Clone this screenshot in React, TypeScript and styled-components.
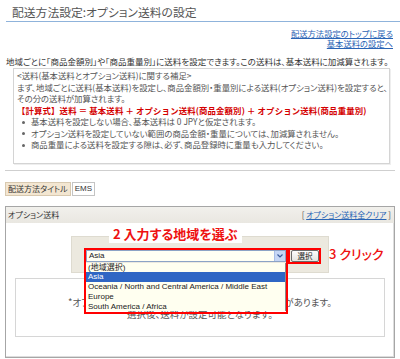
import React from 'react'
import styled, { createGlobalStyle } from 'styled-components'

const GlobalStyle = createGlobalStyle`
    html, body {
        margin: 0;
        padding: 0;
        background: #ffffff;
    }
    body {
        font-family: 'Noto Sans CJK JP', 'Liberation Sans', sans-serif;
        font-feature-settings: 'palt';
        color: #444;
        width: 400px;
        overflow: hidden;
    }
`

const Page = styled.div`
    width: 400px;
    height: 359px;
    box-sizing: border-box;
    padding: 0 5px;
    overflow: hidden;
    position: relative;
`

const Title = styled.h1`
    margin: 0 -5px 0 1px;
    padding: 5px 0 2px 6px;
    font-size: 11.8px;
    line-height: 14px;
    font-weight: 400;
    color: #555;
    border-bottom: 1px solid #8fb3db;
`

const NavLinks = styled.div`
    margin-top: 6px;
    padding-right: 2px;
    display: flex;
    flex-direction: column;
    align-items: flex-end;
`

const NavLink = styled.a`
    font-size: 8.3px;
    line-height: 10px;
    color: #2a64b5;
    text-decoration: underline;
`

const Lead = styled.p`
    margin: 8px 0 0 1px;
    font-size: 8.5px;
    line-height: 10px;
    color: #333;
    white-space: nowrap;
`

const NoteBox = styled.div`
    margin: 2px 5px 0 8px;
    padding: 1px 3px 12px 3px;
    border: 1px solid #d4d4d4;
    box-shadow: 1px 1px 0 #eee;
    font-size: 8.4px;
    line-height: 11.5px;
    color: #555;
    white-space: nowrap;
`

const Formula = styled.div`
    color: #d40000;
    font-weight: 700;
    font-feature-settings: normal;
    letter-spacing: 0.15px;
`

const BulletList = styled.ul`
    margin: 0;
    padding: 0 0 0 14px;
    list-style: none;
`

const Bullet = styled.li`
    position: relative;
    &::before {
        content: '';
        position: absolute;
        left: -9px;
        top: 4.5px;
        width: 3px;
        height: 3px;
        border-radius: 50%;
        background: #666;
    }
`

const Divider = styled.hr`
    margin: 6px 0 0 0;
    border: 0;
    border-top: 1px solid #cfcfcf;
`

const TabRow = styled.div`
    margin-top: 11px;
    display: flex;
    gap: 1px;
`

const Tab = styled.span<{ $active?: boolean }>`
    display: block;
    height: 14px;
    box-sizing: border-box;
    padding: 0 2px;
    font-size: 8px;
    line-height: 12px;
    color: #333;
    border: 1px solid ${({ $active }) => ($active ? '#d8c9b0' : '#c4c4c4')};
    background: ${({ $active }) => ($active ? '#f3e6d1' : '#ffffff')};
    font-family: ${({ $active }) => ($active ? "'Noto Sans CJK JP'" : "'Liberation Sans'")}, sans-serif;
`

const Panel = styled.div`
    margin-top: 10px;
    border: 1px solid #a6a6a6;
    box-shadow: inset -1px -1px 0 #ddd;
`

const PanelHeader = styled.div`
    height: 16px;
    padding: 0 3px 0 2px;
    display: flex;
    align-items: center;
    justify-content: space-between;
    background: linear-gradient(#f1f0ec, #e9e7e1);
    font-size: 8px;
    color: #333;
`

const ClearLink = styled.span`
    color: #555;
    a {
        color: #2a64b5;
        text-decoration: underline;
    }
`

const PanelBody = styled.div`
    padding: 13px 9px 20px 9px;
`

const SelectArea = styled.div`
    position: relative;
    width: 258px;
    height: 37px;
    box-sizing: border-box;
    margin: 0 auto;
    padding: 13px 0 0 14px;
    background: #ece9df;
    border: 1px solid #dedbd0;
    display: flex;
    align-items: flex-start;
`

const Callout = styled.span<{ $boxed?: boolean }>`
    position: absolute;
    color: #ee1111;
    font-size: 13px;
    line-height: 18px;
    font-weight: ${({ $boxed }) => ($boxed ? 700 : 500)};
    white-space: nowrap;
    background: ${({ $boxed }) => ($boxed ? '#ffffff' : 'transparent')};
    padding: 0 4px;
`

const SelectField = styled.div`
    position: relative;
    width: 200px;
    height: 12px;
`

const SelectBox = styled.div`
    height: 12px;
    box-sizing: border-box;
    border: 1px solid #8ca3c6;
    background: #fffff4;
    display: flex;
    align-items: center;
    justify-content: space-between;
    font-family: 'Liberation Sans', sans-serif;
    font-size: 8px;
    color: #222;
    padding-left: 2px;
`

const ArrowButton = styled.span`
    width: 10px;
    height: 10px;
    background: #c6d6f5;
    border-left: 1px solid #a8bde6;
    display: flex;
    align-items: center;
    justify-content: center;
`

const OptionList = styled.ul`
    position: absolute;
    left: 0;
    top: 13px;
    width: 200px;
    margin: 0;
    padding: 0;
    list-style: none;
    background: #fffff0;
    border-right: 1px solid #8a8a8a;
    box-sizing: border-box;
    font-family: 'Liberation Sans', 'Noto Sans CJK JP', sans-serif;
    font-size: 8px;
    z-index: 2;
`

const OptionItem = styled.li<{ $selected?: boolean }>`
    height: 9.8px;
    line-height: 9.8px;
    padding-left: 2px;
    color: ${({ $selected }) => ($selected ? '#ffffff' : '#222')};
    background: ${({ $selected }) => ($selected ? '#2f66c4' : 'transparent')};
    white-space: nowrap;
`

const RedFrame = styled.span`
    position: absolute;
    border: 2px solid #f00;
    box-sizing: border-box;
    z-index: 3;
    pointer-events: none;
`

const ButtonWrap = styled.div`
    position: relative;
    margin-left: 5px;
`

const PickButton = styled.button`
    display: block;
    width: 28px;
    height: 12px;
    padding: 0;
    border: 1px solid #6b6b6b;
    border-radius: 2px;
    background: linear-gradient(#fdfdfd, #e4e4e0);
    font-family: 'Noto Sans CJK JP', sans-serif;
    font-size: 7.5px;
    line-height: 10px;
    color: #222;
`

const InfoBox = styled.div`
    margin-top: 5px;
    height: 59px;
    box-sizing: border-box;
    padding-top: 17px;
    border: 1px solid #d6d6d6;
    text-align: center;
    font-size: 9.5px;
    line-height: 12.5px;
    color: #555;
`

const Chevron = () => (
    <svg width="6" height="4" viewBox="0 0 6 4">
        <path d="M0.5 0.5 L3 3 L5.5 0.5" fill="none" stroke="#3a5a9a" strokeWidth="1.2" />
    </svg>
)

const regions = [
    '(地域選択)',
    'Asia',
    'Oceania / North and Central America / Middle East',
    'Europe',
    'South America / Africa'
]

function App(): JSX.Element {
    return (
        <>
            <GlobalStyle />
            <Page>
                <Title>配送方法設定:オプション送料の設定</Title>
                <NavLinks>
                    <NavLink>配送方法設定のトップに戻る</NavLink>
                    <NavLink>基本送料の設定へ</NavLink>
                </NavLinks>
                <Lead>地域ごとに「商品金額別」や「商品重量別」に送料を設定できます。この送料は、基本送料に加減算されます。</Lead>
                <NoteBox>
                    <div>&lt;送料(基本送料とオプション送料)に関する補足&gt;</div>
                    <div>まず、地域ごとに送料(基本送料)を設定し、商品金額別・重量別による送料(オプション送料)を設定すると、</div>
                    <div>その分の送料が加算されます。</div>
                    <Formula>【計算式】送料 ＝ 基本送料 ＋ オプション送料(商品金額別) ＋ オプション送料(商品重量別)</Formula>
                    <BulletList>
                        <Bullet>基本送料を設定しない場合、基本送料は 0 JPYと仮定されます。</Bullet>
                        <Bullet>オプション送料を設定していない範囲の商品金額・重量については、加減算されません。</Bullet>
                        <Bullet>商品重量による送料を設定する隙は、必ず、商品登録時に重量も入力してください。</Bullet>
                    </BulletList>
                </NoteBox>
                <Divider />
                <TabRow>
                    <Tab $active>配送方法タイトル</Tab>
                    <Tab>EMS</Tab>
                </TabRow>
                <Panel>
                    <PanelHeader>
                        <span>オプション送料</span>
                        <ClearLink>
                            [ <a>オプション送料全クリア</a> ]
                        </ClearLink>
                    </PanelHeader>
                    <PanelBody>
                        <SelectArea>
                            <Callout $boxed style={{ left: 37, top: -12 }}>
                                2 入力する地域を選ぶ
                            </Callout>
                            <SelectField>
                                <SelectBox>
                                    <span>Asia</span>
                                    <ArrowButton>
                                        <Chevron />
                                    </ArrowButton>
                                </SelectBox>
                                <OptionList>
                                    {regions.map((r) => (
                                        <OptionItem key={r} $selected={r === 'Asia'}>
                                            {r}
                                        </OptionItem>
                                    ))}
                                </OptionList>
                                <RedFrame style={{ left: -2, right: -2, top: -2, height: 66 }} />
                            </SelectField>
                            <ButtonWrap>
                                <PickButton>選択</PickButton>
                                <RedFrame style={{ left: -3, right: -2, top: -2, bottom: -2 }} />
                            </ButtonWrap>
                            <Callout style={{ left: 253, top: 8 }}>3 クリック</Callout>
                        </SelectArea>
                        <InfoBox>
                            *オプション送料を設定するには、地域を選択する必要があります。
                            <br />
                            選択後、送料が設定可能となります。
                        </InfoBox>
                    </PanelBody>
                </Panel>
            </Page>
        </>
    )
}

export default App
